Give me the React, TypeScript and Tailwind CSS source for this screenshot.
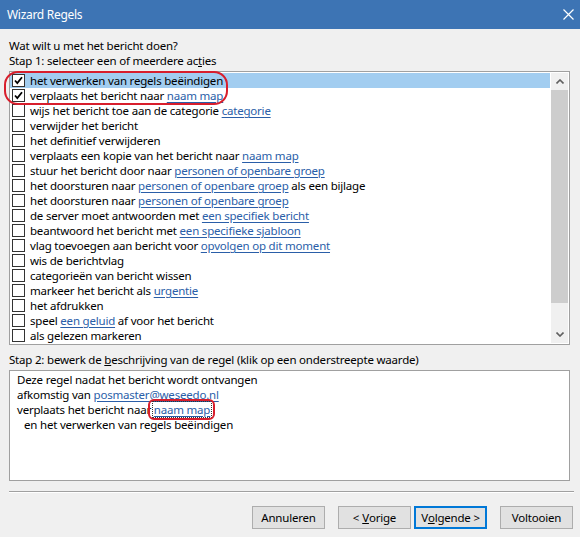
import React from "react";

type Part = { t: string; link?: boolean };
type Row = { parts: Part[]; checked?: boolean; selected?: boolean };

const rows: Row[] = [
  { parts: [{ t: "het verwerken van regels beëindigen" }], checked: true, selected: true },
  { parts: [{ t: "verplaats het bericht naar " }, { t: "naam map", link: true }], checked: true },
  { parts: [{ t: "wijs het bericht toe aan de categorie " }, { t: "categorie", link: true }] },
  { parts: [{ t: "verwijder het bericht" }] },
  { parts: [{ t: "het definitief verwijderen" }] },
  { parts: [{ t: "verplaats een kopie van het bericht naar " }, { t: "naam map", link: true }] },
  { parts: [{ t: "stuur het bericht door naar " }, { t: "personen of openbare groep", link: true }] },
  { parts: [{ t: "het doorsturen naar " }, { t: "personen of openbare groep", link: true }, { t: " als een bijlage" }] },
  { parts: [{ t: "het doorsturen naar " }, { t: "personen of openbare groep", link: true }] },
  { parts: [{ t: "de server moet antwoorden met " }, { t: "een specifiek bericht", link: true }] },
  { parts: [{ t: "beantwoord het bericht met " }, { t: "een specifieke sjabloon", link: true }] },
  { parts: [{ t: "vlag toevoegen aan bericht voor " }, { t: "opvolgen op dit moment", link: true }] },
  { parts: [{ t: "wis de berichtvlag" }] },
  { parts: [{ t: "categorieën van bericht wissen" }] },
  { parts: [{ t: "markeer het bericht als " }, { t: "urgentie", link: true }] },
  { parts: [{ t: "het afdrukken" }] },
  { parts: [{ t: "speel " }, { t: "een geluid", link: true }, { t: " af voor het bericht" }] },
  { parts: [{ t: "als gelezen markeren" }] },
];

function Check({ checked }: { checked?: boolean }) {
  return (
    <div className="w-[13px] h-[13px] border border-[#333333] bg-white flex items-center justify-center shrink-0">
      {checked && (
        <svg width="9" height="9" viewBox="0 0 9 9">
          <path d="M1 4.5 L3.3 7 L8 1.2" fill="none" stroke="#000" strokeWidth="1.8" />
        </svg>
      )}
    </div>
  );
}

function Link({ children }: { children: React.ReactNode }) {
  return <span className="text-[#2a5ea8] underline decoration-[#2a5ea8] underline-offset-[2px]">{children}</span>;
}

function Button({ children, primary }: { children: React.ReactNode; primary?: boolean }) {
  return (
    <div
      className={
        "w-[73px] h-[23px] flex items-center justify-center bg-[#e1e1e1] text-black " +
        (primary ? "border-2 border-[#0078d7]" : "border border-[#adadad]")
      }
    >
      {children}
    </div>
  );
}

export default function App() {
  return (
    <div
      className="w-[580px] h-[537px] bg-[#f0f0f0] text-[11.5px] tracking-[-0.2px] text-black flex flex-col relative overflow-hidden"
      style={{ fontFamily: '"Noto Sans", "Open Sans", sans-serif' }}
    >
      {/* Title bar */}
      <div className="h-[29px] bg-[#3d74b4] flex items-center justify-between pl-[7px] pr-[6px] shrink-0">
        <span className="text-white text-[12px] tracking-[-0.3px]">Wizard Regels</span>
        <svg width="11" height="11" viewBox="0 0 11 11">
          <path d="M0.5 0.5 L10.5 10.5 M10.5 0.5 L0.5 10.5" stroke="#fff" strokeWidth="1.2" />
        </svg>
      </div>

      <div className="pl-[9px] pr-[10px] flex flex-col">
        <div className="mt-[9px] h-[15px] leading-[15px]">Wat wilt u met het bericht doen?</div>
        <div className="h-[15px] leading-[15px]">
          Stap 1: selecteer een of meerdere ac<span className="underline">t</span>ies
        </div>

        {/* List box */}
        <div className="mt-[3px] h-[274px] border border-[#a0a0a0] bg-white flex">
          <div className="flex-1 flex flex-col pt-[1px]">
            {rows.map((r, i) => (
              <div
                key={i}
                className={
                  "h-[15px] flex items-center gap-[5px] pl-[2px] mr-[1px] whitespace-nowrap leading-[15px] " +
                  (r.selected ? "bg-[#a2cdf0]" : "")
                }
              >
                <Check checked={r.checked} />
                <span>
                  {r.parts.map((p, j) => (p.link ? <Link key={j}>{p.t}</Link> : <span key={j}>{p.t}</span>))}
                </span>
              </div>
            ))}
          </div>
          {/* Scrollbar */}
          <div className="w-[17px] mt-[1px] mb-[1px] mr-[1px] flex flex-col bg-[#f0f0f0]">
            <div className="h-[17px] flex items-center justify-center">
              <svg width="8" height="5" viewBox="0 0 8 5">
                <path d="M0.5 4.5 L4 1 L7.5 4.5" fill="none" stroke="#606060" strokeWidth="1.6" />
              </svg>
            </div>
            <div className="h-[213px] bg-[#cdcdcd]" />
            <div className="flex-1" />
            <div className="h-[17px] flex items-center justify-center">
              <svg width="8" height="5" viewBox="0 0 8 5">
                <path d="M0.5 0.5 L4 4 L7.5 0.5" fill="none" stroke="#606060" strokeWidth="1.6" />
              </svg>
            </div>
          </div>
        </div>

        <div className="mt-[7px] h-[15px] leading-[15px]">
          Stap 2: bewerk de <span className="underline">b</span>eschrijving van de regel (klik op een onderstreepte waarde)
        </div>

        {/* Description box */}
        <div className="mt-[3px] h-[111px] border border-[#a0a0a0] bg-white pl-[7px] pt-[1px] flex flex-col leading-[15px] relative">
          <div className="h-[15px]">Deze regel nadat het bericht wordt ontvangen</div>
          <div className="h-[15px]">
            afkomstig van <Link>posmaster@weseedo.nl</Link>
          </div>
          <div className="h-[15px]">
            verplaats het bericht naar{" "}
            <span className="relative">
              <Link>naam map</Link>
              <span className="absolute left-[-2px] right-[-2px] top-[-1px] bottom-[-1px] border border-dotted border-[#333]" />
              <span className="absolute left-[-6px] right-[-5px] top-[-3px] bottom-[-3px] border-2 border-[#d81e2c] rounded-[6px]" />
            </span>
          </div>
          <div className="h-[15px] pl-[7px]">en het verwerken van regels beëindigen</div>
        </div>

        {/* Separator */}
        <div className="mt-[10px] mr-[-4px] h-[2px] border-t border-[#a0a0a0] border-b border-b-white" />

        {/* Buttons */}
        <div className="mt-[13px] flex justify-end mr-[-3px]">
          <Button>Annuleren</Button>
          <div className="w-[13px]" />
          <Button>
            &lt; <span className="underline ml-[3px]">V</span>orige
          </Button>
          <div className="w-[3px]" />
          <Button primary>
            V<span className="underline">o</span>lgende &gt;
          </Button>
          <div className="w-[13px]" />
          <Button>Voltooien</Button>
        </div>
      </div>

      {/* Red ellipse around first two rows */}
      <div className="absolute left-[4px] top-[71px] w-[224px] h-[34px] border-2 border-[#d81e2c] rounded-[14px]" />
    </div>
  );
}
